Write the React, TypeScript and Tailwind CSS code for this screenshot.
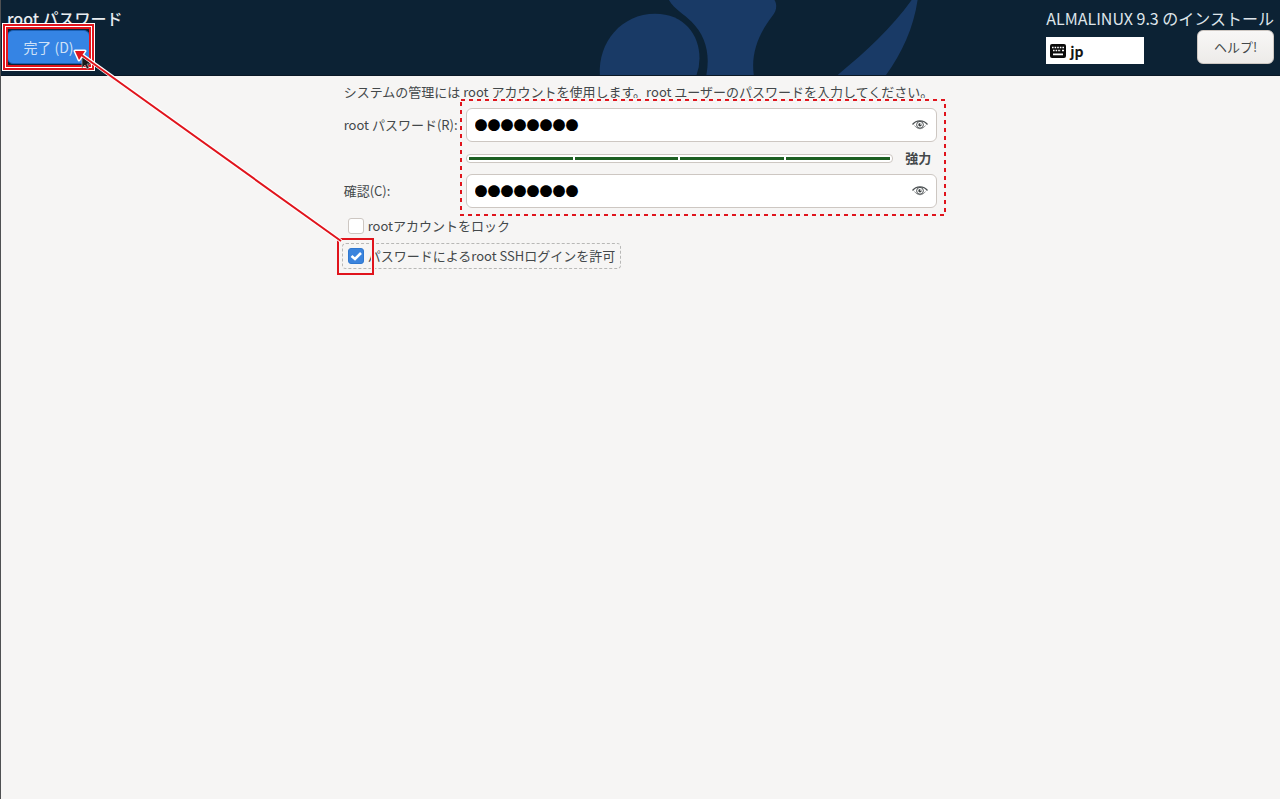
import { useState } from 'react';

interface PasswordRowProps {
  id: string;
  label: string;
}

const STRENGTH_STEPS = [1, 2, 3, 4];
const MASKED = '●●●●●●●●';

function EyeIcon() {
  return (
    <svg width="16" height="12" viewBox="0 0 16 12" fill="none" stroke="#4b5052" aria-hidden="true">
      <path d="M0.5 5.5C4.2 0.6 11.8 0.6 15.5 5.5" strokeWidth="1.3" />
      <path d="M2.5 6.5C5.5 10.8 10.5 10.8 13.5 6.5" strokeWidth="0.6" />
      <circle cx="8" cy="5.8" r="3.4" strokeWidth="1" />
      <circle cx="8" cy="5.8" r="1.7" fill="#3d4244" stroke="none" />
      <circle cx="8.8" cy="5" r="0.8" fill="#fff" stroke="none" />
    </svg>
  );
}

function KeyboardIcon() {
  return (
    <svg width="16" height="14" viewBox="0 0 16 14" aria-hidden="true">
      <rect width="16" height="14" rx="2" fill="#0b0b0b" />
      <path d="M2 3.5h12M3 6.5h8" stroke="#fff" strokeWidth="1.6" strokeDasharray="1.6 1" />
      <path d="M12 6.5h2M3 10.3h10" stroke="#fff" strokeWidth="1.7" />
    </svg>
  );
}

function HeaderLogo() {
  return (
    <svg
      className="absolute inset-y-0 left-1/2 -ml-24 h-full"
      width="384"
      height="76"
      viewBox="546 0 384 76"
      fill="#193a66"
      aria-hidden="true"
    >
      <path d="M599 76C597 43 621 14 655 14C684 14 700 35 700 59Q700 68 697 76Z" />
      <path d="M669 0H776C779 5 778 11 774 16C760 34 752 54 755 76H707C711 54 706 36 692 22C684 14 675 10 669 0Z" />
      <path d="M840 76C870 51 894 29 915 0H921C917 28 905 54 889 76Z" />
    </svg>
  );
}

function PasswordRow({ id, label }: PasswordRowProps) {
  const [value, setValue] = useState(MASKED);
  return (
    <>
      <label htmlFor={id} className="whitespace-nowrap">
        {label}
      </label>
      <div className="flex h-[34px] items-center rounded-md border border-[#cdc7c2] bg-white pr-2">
        <input
          id={id}
          autoComplete="off"
          value={value}
          onChange={(e) => setValue(e.target.value)}
          className="min-w-0 flex-1 bg-transparent pl-2 text-[13px] leading-5 text-black outline-none"
        />
        <button type="button" aria-label="パスワードを表示">
          <EyeIcon />
        </button>
      </div>
    </>
  );
}

function Strength() {
  return (
    <div className="col-start-2 flex h-8 items-center gap-3">
      <div className="flex h-[9px] flex-1 gap-[2px] rounded-sm border border-[#cdc7c2] bg-white p-[2px]">
        {STRENGTH_STEPS.map((s) => (
          <span key={s} className="h-[3px] flex-1 bg-[#1d5f22]" />
        ))}
      </div>
      <span className="pr-[6px] text-[13px] font-bold">強力</span>
    </div>
  );
}

function DottedFrame() {
  return (
    <svg
      className="pointer-events-none absolute -top-[10px] left-[115px] h-[119px] w-[488px]"
      fill="none"
      aria-hidden="true"
    >
      <rect x="2" y="2" width="484" height="115" stroke="#f6f5f4" strokeWidth="4" />
      <rect x="2" y="2" width="484" height="115" stroke="#e0141c" strokeWidth="2" strokeDasharray="4 4" />
    </svg>
  );
}

export default function App() {
  const [locked, setLocked] = useState(false);
  const [allowSsh, setAllowSsh] = useState(true);

  return (
    <div className="relative min-h-screen border-l border-[#4f5052] bg-[#f6f5f4] font-['Noto_Sans_CJK_JP',sans-serif] text-[13px] leading-5 text-[#43484a]">
      <header className="relative flex h-[76px] justify-between border-b border-[#0a1826] bg-[#0c2234] px-[6px] pt-[6px]">
        <HeaderLogo />
        <div className="relative">
          <h1 className="text-[16px] leading-6 font-medium text-[#e9edf0]">root パスワード</h1>
          <div className="relative w-[83px]">
            <button
              type="button"
              className="h-[34px] w-full rounded-md border border-[#1b5fb4] bg-[#3584e4] text-[14px] text-[#cfe1f7]"
            >
              完了 (D)
            </button>
            <div className="pointer-events-none absolute -inset-x-[5px] -inset-y-[7px] border-6 border-white">
              <div className="absolute -inset-[5px] border-2 border-[#e0141c]" />
              <div className="absolute -inset-[2px] border-2 border-[#e0141c]" />
            </div>
          </div>
        </div>
        <div className="relative">
          <p className="text-[16px] leading-6 text-[#dfe5ea]">ALMALINUX 9.3 のインストール</p>
          <div className="flex items-start justify-between">
            <button
              type="button"
              className="mt-[7px] flex h-[27px] w-[98px] items-center gap-1 bg-white pl-1 text-[14px] font-bold text-[#151515]"
            >
              <KeyboardIcon />
              jp
            </button>
            <button
              type="button"
              className="h-[34px] w-[77px] rounded-md border border-[#cdc7c2] bg-gradient-to-b from-[#f8f7f6] to-[#edebe9] text-[13px]"
            >
              ヘルプ!
            </button>
          </div>
        </div>
      </header>

      <main className="mx-auto w-max pt-[6px]">
        <p className="mb-[6px] pr-1">
          システムの管理には root アカウントを使用します。root ユーザーのパスワードを入力してください。
        </p>
        <div className="relative grid grid-cols-[auto_1fr] items-center gap-x-2">
          <PasswordRow id="root-password" label="root パスワード(R):" />
          <Strength />
          <PasswordRow id="confirm" label="確認(C):" />
          <DottedFrame />
        </div>
        <div className="-ml-[2px] mt-[5px] flex flex-col items-start gap-1">
          <label className="flex h-[26px] items-center gap-1 border border-transparent px-[5px]">
            <input
              type="checkbox"
              checked={locked}
              onChange={(e) => setLocked(e.target.checked)}
              className="h-4 w-4 appearance-none rounded-[3px] border border-[#cdc7c2] bg-white"
            />
            rootアカウントをロック
          </label>
          <label className="relative flex h-[26px] items-center gap-1 rounded-sm border border-dashed border-[#b8b8b6] px-[5px]">
            <input
              type="checkbox"
              checked={allowSsh}
              onChange={(e) => setAllowSsh(e.target.checked)}
              className="peer h-4 w-4 appearance-none rounded-[3px] border border-[#cdc7c2] bg-white checked:border-[#2f78d0] checked:bg-[#3b84dd]"
            />
            <svg
              className="pointer-events-none absolute left-[5px] hidden peer-checked:block"
              width="16"
              height="16"
              viewBox="0 0 16 16"
              fill="none"
              stroke="#fff"
              strokeWidth="2.6"
              aria-hidden="true"
            >
              <path d="M3.5 8L7 11L13 5" />
            </svg>
            パスワードによるroot SSHログインを許可
            <span className="pointer-events-none absolute -top-[7px] -left-[7px] h-[39px] w-[39px] border-4 border-[#f6f5f4]">
              <span className="absolute -inset-[3px] border-2 border-[#e0141c]" />
            </span>
          </label>
        </div>
      </main>

      <svg
        className="pointer-events-none absolute top-0 left-0"
        width="360"
        height="260"
        viewBox="1 0 360 260"
        aria-hidden="true"
      >
        <path d="M82 54v14l3-3 2 4 2-1-2-4h4z" fill="#1a1a1a" stroke="#aaa" strokeWidth="0.7" />
        <path d="M82 55L341 241" stroke="#fff" strokeWidth="4" />
        <path d="M75 51L85 51L79 60Z" fill="#e0141c" stroke="#fff" strokeWidth="3" strokeLinejoin="round" />
        <path d="M80 54L341 241" stroke="#e0141c" strokeWidth="2" />
        <path d="M75 51L85 51L79 60Z" fill="#e0141c" />
      </svg>
    </div>
  );
}
